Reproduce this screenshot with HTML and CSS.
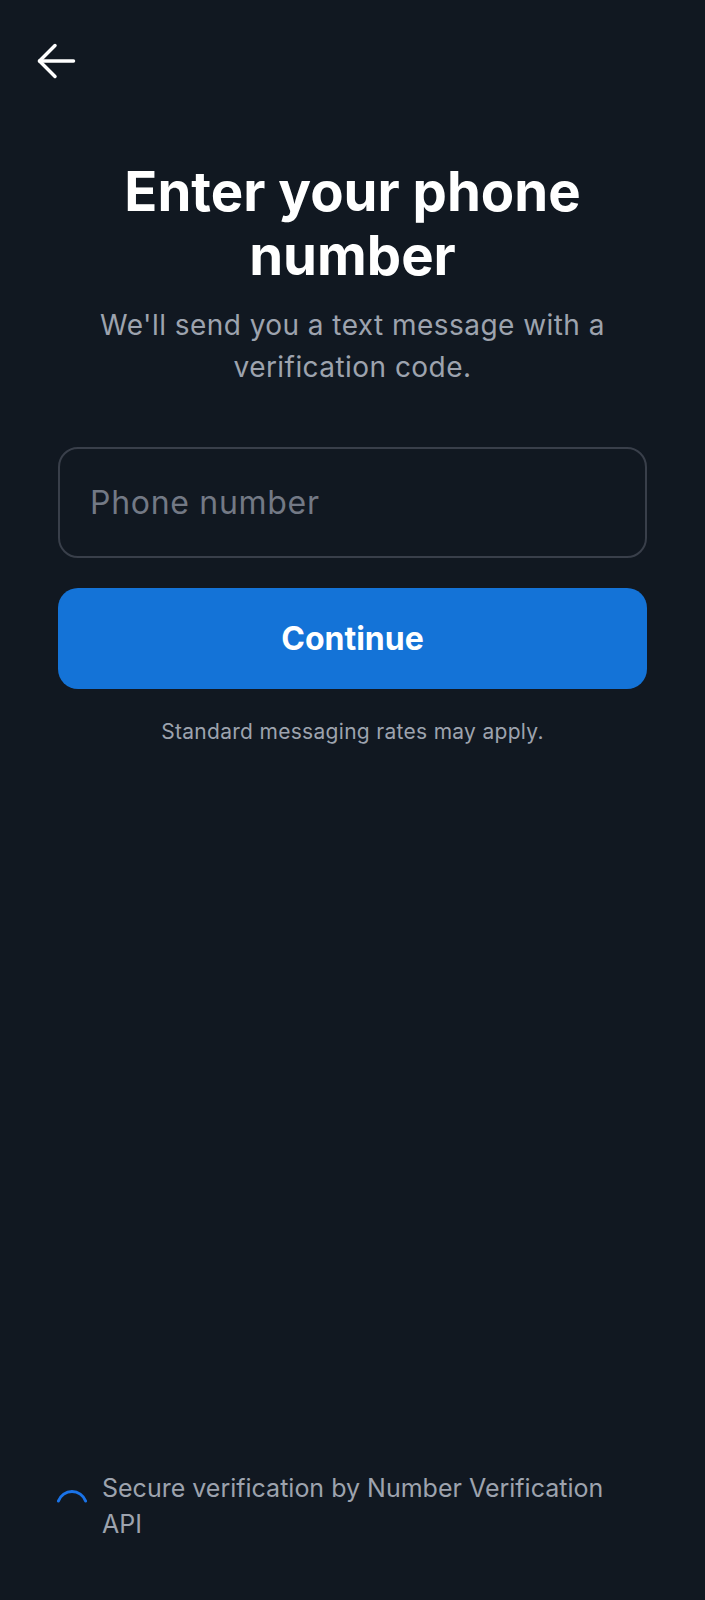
FILE: index.html
```html
<!DOCTYPE html>
<html lang="en">
<head>
<meta charset="utf-8">
<title>Enter your phone number</title>
<link rel="stylesheet" href="styles.css">
</head>
<body>
<div class="page">
  <header class="topbar">
    <button class="back" aria-label="Back">
      <svg width="40" height="40" viewBox="0 0 40 40" fill="none" stroke="#ffffff" stroke-width="3.5" stroke-linecap="round" stroke-linejoin="round">
        <path d="M3.5 20H37.5"/>
        <path d="M19 4.5L3.5 20L19 35.5"/>
      </svg>
    </button>
  </header>

  <main class="content">
    <h1 class="title">Enter your phone number</h1>
    <p class="subtitle">We'll send you a text message with a verification code.</p>

    <form class="form">
      <input class="phone-input" type="tel" placeholder="Phone number">
      <button class="continue" type="button">Continue</button>
    </form>

    <p class="note">Standard messaging rates may apply.</p>
  </main>

  <footer class="footer">
    <svg class="spinner" width="32" height="32" viewBox="0 0 32 32" fill="none">
      <path d="M2.4 11.0A14.5 14.5 0 0 1 29.6 11.0" stroke="#1a73e8" stroke-width="3" stroke-linecap="round"/>
    </svg>
    <p class="footer-text">Secure verification by Number Verification API</p>
  </footer>
</div>
</body>
</html>
```

FILE: styles.css
```css
* {
  box-sizing: border-box;
}

html, body {
  margin: 0;
  padding: 0;
  background: #111821;
}

body {
  font-family: Inter, "Noto Sans", sans-serif;
  color: #ffffff;
}

.page {
  min-height: 1600px;
  display: flex;
  flex-direction: column;
  padding: 0 58px 58px;
}

.topbar {
  display: flex;
  padding-top: 41px;
}

.back {
  margin-left: -22px;
  width: 40px;
  height: 40px;
  padding: 0;
  border: 0;
  background: transparent;
  display: flex;
}

.content {
  display: flex;
  flex-direction: column;
  align-items: center;
}

.title {
  margin: 78px 0 0;
  font-size: 54.5px;
  line-height: 64px;
  font-weight: 700;
  text-align: center;
  letter-spacing: 0;
}

.subtitle {
  margin: 17px 0 0;
  max-width: 560px;
  font-size: 28px;
  line-height: 42px;
  font-weight: 400;
  letter-spacing: 0.45px;
  color: #9da3ae;
  text-align: center;
}

.form {
  width: 100%;
  margin-top: 59px;
  display: flex;
  flex-direction: column;
  gap: 30px;
}

.phone-input {
  width: 100%;
  height: 111px;
  padding: 0 30px;
  border: 2px solid #393f4a;
  border-radius: 20px;
  background: transparent;
  font-family: Inter, "Noto Sans", sans-serif;
  font-size: 32px;
  letter-spacing: 0.7px;
  color: #ffffff;
  outline: none;
}

.phone-input::placeholder {
  color: #737985;
}

.continue {
  width: 100%;
  height: 101px;
  border: 0;
  border-radius: 20px;
  background: #1473d7;
  color: #ffffff;
  font-family: Inter, "Noto Sans", sans-serif;
  font-size: 32px;
  font-weight: 700;
}

.note {
  margin: 29px 0 0;
  font-size: 21px;
  line-height: 28px;
  letter-spacing: 0.3px;
  color: #9da3ae;
  text-align: center;
}

.footer {
  margin-top: auto;
  display: flex;
  align-items: center;
  gap: 14px;
}

.spinner {
  flex: none;
  margin-left: -2px;
}

.footer-text {
  margin: 0;
  max-width: 530px;
  font-size: 25px;
  line-height: 36px;
  letter-spacing: 0;
  color: #9da3ae;
}
```
